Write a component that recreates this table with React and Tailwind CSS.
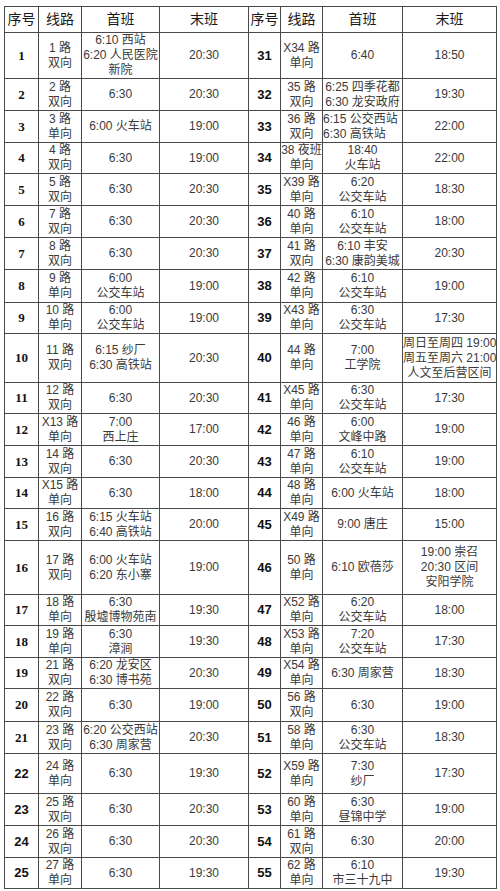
import React from "react";

// 行高（与原表对齐）
const rowHeights = [
  "h-[46px]", "h-[32px]", "h-[32px]", "h-[31px]", "h-[32px]",
  "h-[32px]", "h-[32px]", "h-[33px]", "h-[31px]", "h-[49px]",
  "h-[31px]", "h-[32px]", "h-[32px]", "h-[31px]", "h-[32px]",
  "h-[54px]", "h-[31px]", "h-[32px]", "h-[31px]", "h-[33px]",
  "h-[32px]", "h-[40px]", "h-[32px]", "h-[32px]", "h-[31px]",
];

const SHUANG = "双向";
const DAN = "单向";

const leftRows = [
  { n: 1, r: ["1 路", SHUANG], f: ["6:10 西站", "6:20 人民医院", "新院"], l: ["20:30"] },
  { n: 2, r: ["2 路", SHUANG], f: ["6:30"], l: ["20:30"] },
  { n: 3, r: ["3 路", DAN], f: ["6:00 火车站"], l: ["19:00"] },
  { n: 4, r: ["4 路", SHUANG], f: ["6:30"], l: ["19:00"] },
  { n: 5, r: ["5 路", SHUANG], f: ["6:30"], l: ["20:30"] },
  { n: 6, r: ["7 路", SHUANG], f: ["6:30"], l: ["20:30"] },
  { n: 7, r: ["8 路", SHUANG], f: ["6:30"], l: ["20:30"] },
  { n: 8, r: ["9 路", DAN], f: ["6:00", "公交车站"], l: ["19:00"] },
  { n: 9, r: ["10 路", DAN], f: ["6:00", "公交车站"], l: ["19:00"] },
  { n: 10, r: ["11 路", SHUANG], f: ["6:15 纱厂", "6:30 高铁站"], l: ["20:30"] },
  { n: 11, r: ["12 路", SHUANG], f: ["6:30"], l: ["20:30"] },
  { n: 12, r: ["X13 路", DAN], f: ["7:00", "西上庄"], l: ["17:00"] },
  { n: 13, r: ["14 路", SHUANG], f: ["6:30"], l: ["20:30"] },
  { n: 14, r: ["X15 路", DAN], f: ["6:30"], l: ["18:00"] },
  { n: 15, r: ["16 路", SHUANG], f: ["6:15 火车站", "6:40 高铁站"], l: ["20:00"] },
  { n: 16, r: ["17 路", SHUANG], f: ["6:00 火车站", "6:20 东小寨"], l: ["19:00"] },
  { n: 17, r: ["18 路", DAN], f: ["6:30", "殷墟博物苑南"], l: ["19:30"] },
  { n: 18, r: ["19 路", DAN], f: ["6:30", "漳涧"], l: ["19:30"] },
  { n: 19, r: ["21 路", SHUANG], f: ["6:20 龙安区", "6:30 博书苑"], l: ["20:30"] },
  { n: 20, r: ["22 路", SHUANG], f: ["6:30"], l: ["19:00"] },
  { n: 21, r: ["23 路", SHUANG], f: ["6:20 公交西站", "6:30 周家营"], l: ["20:30"] },
  { n: 22, r: ["24 路", DAN], f: ["6:30"], l: ["19:30"], sans: true },
  { n: 23, r: ["25 路", SHUANG], f: ["6:30"], l: ["20:30"], sans: true },
  { n: 24, r: ["26 路", SHUANG], f: ["6:30"], l: ["20:30"], sans: true },
  { n: 25, r: ["27 路", DAN], f: ["6:30"], l: ["19:30"], sans: true },
];

const rightRows = [
  { n: 31, r: ["X34 路", DAN], f: ["6:40"], l: ["18:50"] },
  { n: 32, r: ["35 路", SHUANG], f: ["6:25 四季花都", "6:30 龙安政府"], l: ["19:30"] },
  { n: 33, r: ["36 路", SHUANG], f: ["6:15 公交西站", "6:30 高铁站"], l: ["22:00"], leftAlign: true },
  { n: 34, r: ["38 夜班", DAN], f: ["18:40", "火车站"], l: ["22:00"] },
  { n: 35, r: ["X39 路", DAN], f: ["6:20", "公交车站"], l: ["18:30"] },
  { n: 36, r: ["40 路", DAN], f: ["6:10", "公交车站"], l: ["18:00"] },
  { n: 37, r: ["41 路", SHUANG], f: ["6:10 丰安", "6:30 康韵美城"], l: ["20:30"] },
  { n: 38, r: ["42 路", DAN], f: ["6:10", "公交车站"], l: ["19:00"] },
  { n: 39, r: ["X43 路", DAN], f: ["6:30", "公交车站"], l: ["17:30"] },
  { n: 40, r: ["44 路", DAN], f: ["7:00", "工学院"], l: ["周日至周四 19:00", "周五至周六 21:00", "人文至后营区间"] },
  { n: 41, r: ["X45 路", DAN], f: ["6:30", "公交车站"], l: ["17:30"] },
  { n: 42, r: ["46 路", DAN], f: ["6:00", "文峰中路"], l: ["19:00"] },
  { n: 43, r: ["47 路", DAN], f: ["6:10", "公交车站"], l: ["19:00"] },
  { n: 44, r: ["48 路", DAN], f: ["6:00 火车站"], l: ["18:00"] },
  { n: 45, r: ["X49 路", DAN], f: ["9:00 唐庄"], l: ["15:00"] },
  { n: 46, r: ["50 路", DAN], f: ["6:10 欧蓓莎"], l: ["19:00 崇召", "20:30 区间", "安阳学院"] },
  { n: 47, r: ["X52 路", DAN], f: ["6:20", "公交车站"], l: ["18:00"] },
  { n: 48, r: ["X53 路", DAN], f: ["7:20", "公交车站"], l: ["17:30"] },
  { n: 49, r: ["X54 路", DAN], f: ["6:30 周家营"], l: ["18:30"] },
  { n: 50, r: ["56 路", SHUANG], f: ["6:30"], l: ["19:00"] },
  { n: 51, r: ["58 路", DAN], f: ["6:30", "公交车站"], l: ["18:30"] },
  { n: 52, r: ["X59 路", DAN], f: ["7:30", "纱厂"], l: ["17:30"] },
  { n: 53, r: ["60 路", DAN], f: ["6:30", "昼锦中学"], l: ["19:00"] },
  { n: 54, r: ["61 路", SHUANG], f: ["6:30"], l: ["20:00"] },
  { n: 55, r: ["62 路", DAN], f: ["6:10", "市三十九中"], l: ["19:30"] },
];

const cellBase = "border border-[#4a4a4a] p-0 align-middle";

const Lines = ({ lines }) => (
  <>
    {lines.map((t, i) => (
      <div key={i} className="leading-[15px] whitespace-nowrap">
        {t}
      </div>
    ))}
  </>
);

const NumCell = ({ n, sans }) => (
  <td
    className={`${cellBase} text-center font-bold text-[13px] text-[#111] ${
      sans ? "font-['Liberation_Sans',sans-serif]" : "font-['Liberation_Serif',serif]"
    }`}
  >
    {n}
  </td>
);

const HalfRow = ({ row, sans }) => (
  <>
    <NumCell n={row.n} sans={sans} />
    <td className={`${cellBase} text-center`}>
      <Lines lines={row.r} />
    </td>
    <td className={`${cellBase} ${row.leftAlign ? "text-left" : "text-center"} overflow-hidden`}>
      <Lines lines={row.f} />
    </td>
    <td className={`${cellBase} text-center`}>
      <Lines lines={row.l} />
    </td>
  </>
);

const headers = ["序号", "线路", "首班", "末班"];

export default function App() {
  return (
    <div className="w-[500px] h-[891px] bg-white pt-[6px] pl-[4px] font-['Liberation_Sans','Noto_Sans_CJK_SC',sans-serif] text-[12px] text-[#3a3a3a]">
      <table className="table-fixed border-collapse w-[492px]">
        <colgroup>
          <col className="w-[34px]" />
          <col className="w-[43px]" />
          <col className="w-[78px]" />
          <col className="w-[89px]" />
          <col className="w-[32px]" />
          <col className="w-[42px]" />
          <col className="w-[80px]" />
          <col className="w-[94px]" />
        </colgroup>
        <thead>
          <tr className="h-[26px]">
            {[...headers, ...headers].map((h, i) => (
              <th
                key={i}
                className={`${cellBase} text-center font-normal text-[14px] text-[#1a1a1a] whitespace-nowrap`}
              >
                {h}
              </th>
            ))}
          </tr>
        </thead>
        <tbody>
          {leftRows.map((row, i) => (
            <tr key={row.n} className={rowHeights[i]}>
              <HalfRow row={row} sans={row.sans} />
              <HalfRow row={rightRows[i]} sans />
            </tr>
          ))}
        </tbody>
      </table>
    </div>
  );
}
